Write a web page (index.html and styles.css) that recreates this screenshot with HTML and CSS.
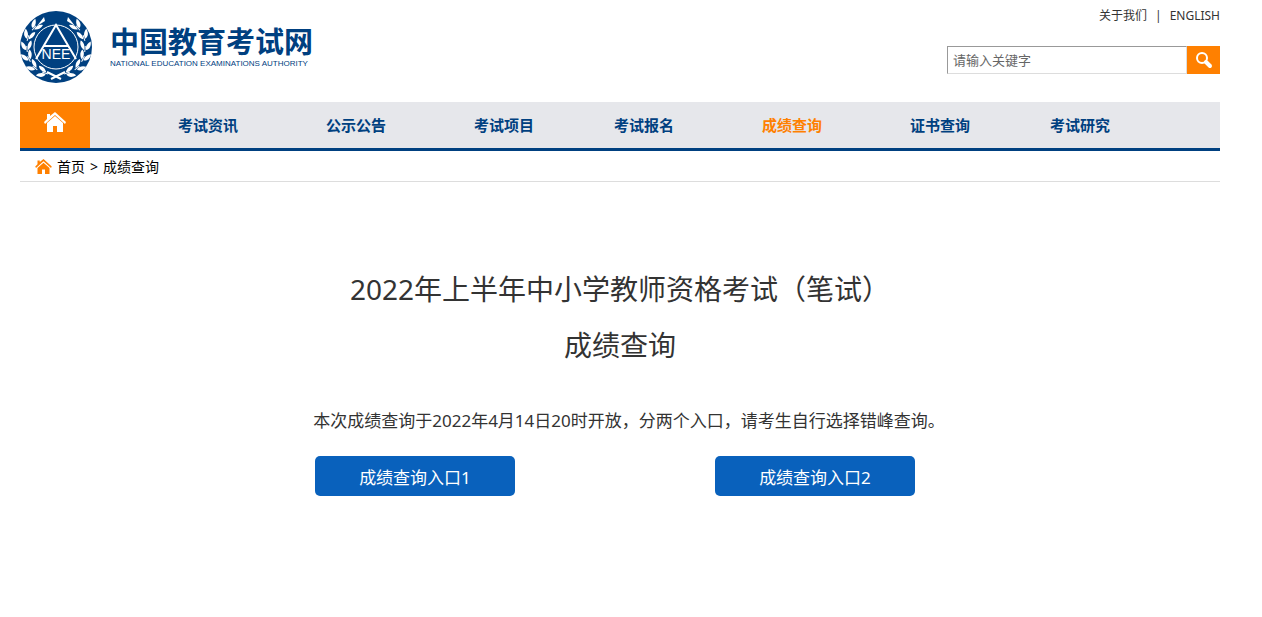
FILE: index.html
```
<!DOCTYPE html>
<html lang="zh-CN">
<head>
    <meta charset="utf-8">
    <title>成绩查询 - 中国教育考试网</title>
    <meta name="viewport" content="width=device-width, initial-scale=1.0">
    <link rel="stylesheet" href="styles.css">
</head>
<body>
    <header class="header">
        <a class="logo" href="#">
            <svg class="emblem" viewBox="0 0 72 72" aria-hidden="true">
                <defs>
                    <g id="leaf">
                        <path d="M-1 1C-5 0 -6 -4 -5 -8C-2 -6 0 -3 -1 1Z"/>
                        <path d="M1 1C0 -3 2 -7 5 -8C6 -4 4 -1 1 1Z"/>
                        <path d="M0 3V-3" stroke="#fff"/>
                    </g>
                    <!-- left laurel branch, mirrored for the right side -->
                    <g id="branch" fill="#fff">
                        <use href="#leaf" transform="translate(25 62) rotate(-72)"/>
                        <use href="#leaf" transform="translate(15 57) rotate(-50)"/>
                        <use href="#leaf" transform="translate(9 48) rotate(-28)"/>
                        <use href="#leaf" transform="translate(7 38) rotate(-5)"/>
                        <use href="#leaf" transform="translate(8 27) rotate(18)"/>
                        <use href="#leaf" transform="translate(14 17) rotate(40)"/>
                        <path d="M17 15L24 6L25 10Z"/>
                    </g>
                </defs>
                <circle cx="36" cy="36" r="36" fill="#004080"/>
                <use href="#branch"/>
                <use href="#branch" transform="matrix(-1 0 0 1 72 0)"/>
                <path d="M27 61L41 68M45 61L31 68" stroke="#fff" stroke-width="2"/>
                <circle cx="36" cy="36" r="22" fill="#004080" stroke="#fff"/>
                <path d="M16 48L36 14L56 48M24 35H48" fill="none" stroke="#fff" stroke-width="2"/>
                <text x="36" y="48" text-anchor="middle">NEE</text>
            </svg>
            <span class="site-name">
                <strong>中国教育考试网</strong>
                <small>NATIONAL EDUCATION EXAMINATIONS AUTHORITY</small>
            </span>
        </a>
        <div class="tools">
            <div class="top-links">
                <a href="#">关于我们</a><span>|</span><a href="#">ENGLISH</a>
            </div>
            <form class="search">
                <input type="text" aria-label="关键字" placeholder="请输入关键字">
                <button type="submit" aria-label="搜索">
                    <svg viewBox="0 0 18 18" aria-hidden="true">
                        <circle cx="7" cy="7" r="5" fill="none" stroke="#fff" stroke-width="2"/>
                        <path d="M11 11L15 15" stroke="#fff" stroke-width="4" stroke-linecap="round"/>
                    </svg>
                </button>
            </form>
        </div>
    </header>

    <nav class="nav">
        <a class="home" href="#" aria-label="首页">
            <svg viewBox="0 0 22 20" aria-hidden="true"><path d="M11 0L22 10L21 12L11 3L1 12L0 10L3 7V2H6V4ZM11 4L19 11V20H13V14H9V20H3V11Z"/></svg>
        </a>
        <ul>
            <li><a href="#">考试资讯</a></li>
            <li><a href="#">公示公告</a></li>
            <li><a href="#">考试项目</a></li>
            <li><a href="#">考试报名</a></li>
            <li><a class="active" href="#">成绩查询</a></li>
            <li><a href="#">证书查询</a></li>
            <li><a href="#">考试研究</a></li>
        </ul>
    </nav>

    <div class="breadcrumb">
        <svg viewBox="0 0 22 20" aria-hidden="true"><path d="M11 0L22 10L21 12L11 3L1 12L0 10L3 7V2H6V4ZM11 5L19 12V20H13V14H9V20H3V12Z"/></svg>
        <a href="#">首页</a>
        <span>&gt;</span>
        <a href="#">成绩查询</a>
    </div>

    <main>
        <h1>2022年上半年中小学教师资格考试（笔试）<br>成绩查询</h1>
        <p>本次成绩查询于2022年4月14日20时开放，分两个入口，请考生自行选择错峰查询。</p>
        <div class="entries">
            <button type="button">成绩查询入口1</button>
            <button type="button">成绩查询入口2</button>
        </div>
    </main>
</body>
</html>
```
FILE: styles.css
```
* {
    box-sizing: border-box;
}

body {
    margin: 0 42px 0 20px;
    font-family: "Noto Sans", "Noto Sans CJK SC", sans-serif;
    font-size: 14px;
    color: #333;
    background-color: #fff;
}

a {
    color: inherit;
    text-decoration: none;
}

/* header */
.header {
    display: flex;
    justify-content: space-between;
    height: 102px;
}

.logo {
    display: flex;
    align-items: flex-start;
    gap: 18px;
    padding-top: 11px;
    color: #004080;
}

.emblem {
    width: 72px;
    height: 72px;
}

.emblem text {
    font-family: "Liberation Sans", sans-serif;
    font-size: 14px;
    fill: #fff;
}

.site-name {
    display: flex;
    flex-direction: column;
    padding-top: 12px;
    white-space: nowrap;
}

.site-name strong {
    font-family: "Noto Sans CJK SC", sans-serif;
    font-size: 29px;
    line-height: 34px;
}

.site-name small {
    font-family: "Liberation Sans", sans-serif;
    font-size: 8px;
    line-height: 14px;
}

.tools {
    display: flex;
    flex-direction: column;
    align-items: flex-end;
}

.top-links {
    display: flex;
    gap: 8px;
    height: 46px;
    font-size: 12px;
    line-height: 32px;
}

.search {
    display: flex;
    height: 28px;
}

.search input {
    width: 240px;
    padding: 0 5px;
    border: 1px solid #ddd;
    border-top-color: #999;
    border-left-color: #999;
    font-family: inherit;
    font-size: 13px;
}

.search input::placeholder {
    color: #666;
}

.search button {
    width: 33px;
    padding: 0;
    border: none;
    background-color: #ff8000;
    cursor: pointer;
}

.search svg {
    display: block;
    width: 18px;
    height: 18px;
    margin: 0 auto;
}

/* navigation */
.nav {
    display: flex;
    height: 49px;
    background-color: #e6e7eb;
    border-bottom: 3px solid #004080;
}

.home {
    width: 70px;
    padding-top: 10px;
    background-color: #ff8000;
    text-align: center;
}

.home svg {
    width: 22px;
    height: 20px;
    fill: #fff;
}

.nav ul {
    display: flex;
    margin: 0;
    padding: 0 0 0 44px;
    list-style: none;
}

.nav li {
    padding: 0 44px;
    font-size: 15px;
    font-weight: bold;
    line-height: 46px;
    white-space: nowrap;
    color: #004080;
}

.nav li:nth-child(3n) {
    padding-right: 36px;
}

.nav .active {
    color: #ff8000;
}

.breadcrumb {
    display: flex;
    align-items: center;
    gap: 5px;
    height: 31px;
    padding-left: 15px;
    border-bottom: 1px solid #ddd;
    color: #000;
}

.breadcrumb svg {
    width: 17px;
    height: 15px;
    fill: #ff8000;
}

/* score query */
main {
    padding-top: 79px;
    text-align: center;
}

h1 {
    margin: 0;
    font-size: 28px;
    font-weight: normal;
    line-height: 56px;
}

main p {
    margin: 33px 0 20px;
    padding-left: 18px;
    font-size: 17px;
    line-height: 30px;
}

.entries {
    display: flex;
    gap: 200px;
    max-width: 610px;
    margin: 0 auto;
}

.entries button {
    width: 200px;
    height: 40px;
    border: none;
    border-radius: 5px;
    background-color: #0961bc;
    color: #fff;
    font-family: inherit;
    font-size: 17px;
    cursor: pointer;
}
```
